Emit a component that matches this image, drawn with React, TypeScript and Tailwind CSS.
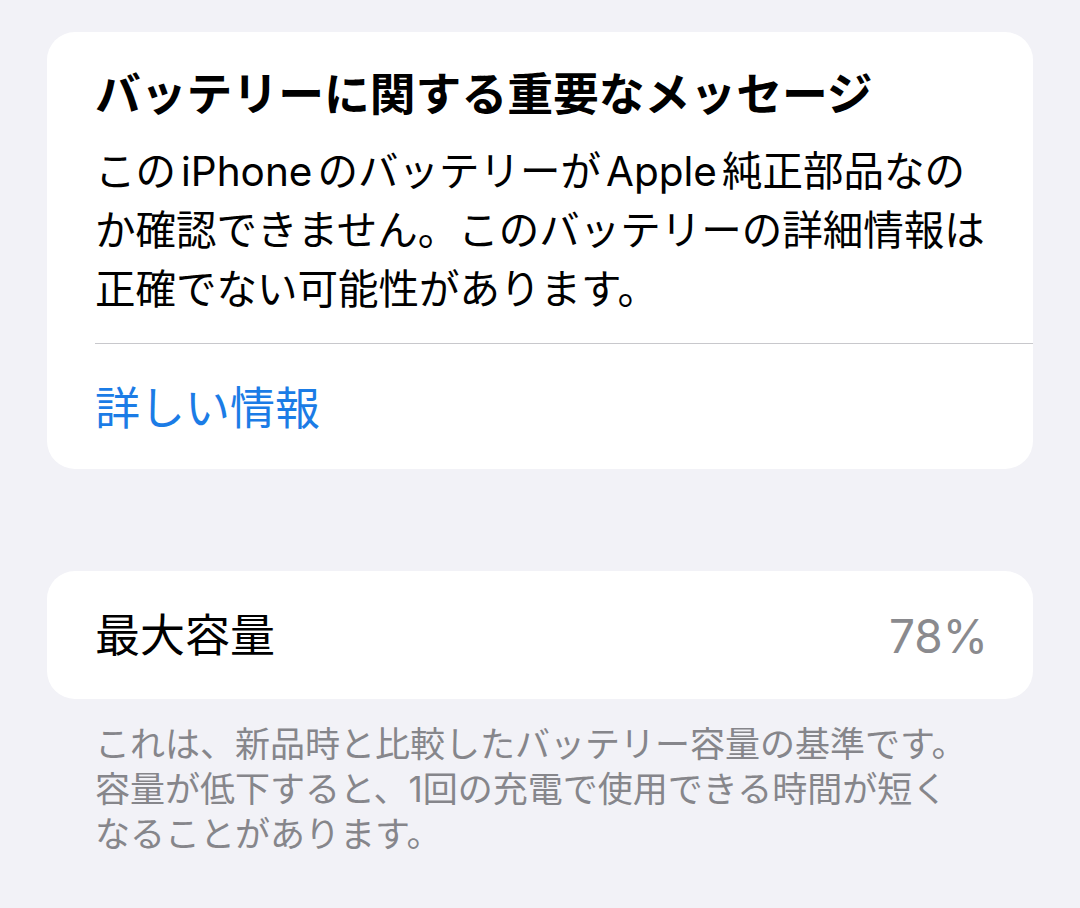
import React from "react";

const font = { fontFamily: 'Inter, "Noto Sans CJK JP", sans-serif' };

export default function App() {
  return (
    <div
      className="min-h-[908px] w-full bg-[#f2f2f7] px-[47px] pt-[32px] text-black"
      style={font}
    >
      {/* Card 1 */}
      <div className="overflow-hidden rounded-[28px] bg-white">
        <div className="pl-[48px] pr-[40px] pt-[36px]">
          <div className="text-[45.8px] font-bold leading-[54px] whitespace-nowrap">
            バッテリーに関する重要なメッセージ
          </div>
          <div className="mt-[20px] text-[40.5px] leading-[59px] whitespace-nowrap">
            この<span className="mx-[5px]">iPhone</span>のバッテリーが
            <span className="mx-[5px]">Apple</span>純正部品なの
            <br />
            か確認できません。このバッテリーの詳細情報は
            <br />
            正確でない可能性があります。
          </div>
        </div>
        <div className="ml-[48px] mt-[24px] h-px bg-[#c8c8cc]" />
        <div className="pl-[48px] pt-[38px] pb-[33px]">
          <div className="text-[45px] leading-[54px] text-[#1b7ce6]">詳しい情報</div>
        </div>
      </div>

      {/* Card 2 */}
      <div className="mt-[102px] flex h-[128px] items-center justify-between rounded-[28px] bg-white pl-[48px] pr-[45px] pt-[2px]">
        <div className="text-[45px] leading-[54px]">最大容量</div>
        <div className="text-[46px] leading-[54px] text-[#8a8a8e]">78%</div>
      </div>

      {/* Footer */}
      <div className="mt-[23px] pl-[48px] text-[35px] leading-[45px] text-[#86868b] whitespace-nowrap">
        これは、新品時と比較したバッテリー容量の基準です。
        <br />
        容量が低下すると、1回の充電で使用できる時間が短く
        <br />
        なることがあります。
      </div>
    </div>
  );
}
